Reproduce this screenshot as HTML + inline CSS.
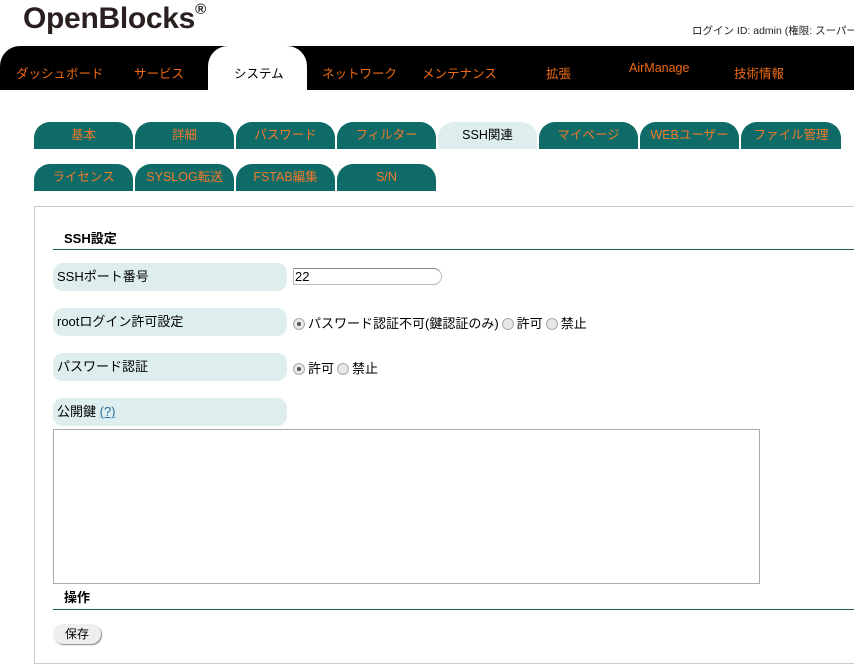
<!DOCTYPE html>
<html><head><meta charset="utf-8"><style>
*{margin:0;padding:0;box-sizing:border-box}
html,body{width:854px;height:669px;overflow:hidden}
body{background:#fff;font-family:"Liberation Sans","Noto Sans CJK JP",sans-serif;position:relative;font-size:13px;color:#000}
.a{position:absolute}
.logo{left:23px;top:1px;font-size:30px;font-weight:bold;color:#2a2020;letter-spacing:-0.3px}
.logo sup{font-size:15px;vertical-align:14px}
.login{left:692px;top:23px;font-size:10.5px;white-space:nowrap;color:#222;width:162px;overflow:hidden}
.nav{left:0;top:46px;width:854px;height:44px;background:#000;border-top-left-radius:20px}
.ni{position:absolute;top:17px;color:#f06a10;font-size:12.5px;white-space:nowrap}
.act{left:208px;top:46px;width:99px;height:44px;background:#fff;border-radius:20px 20px 0 0}
.t{position:absolute;width:99px;height:27px;background:#0e6b68;color:#f07a2a;border-radius:16px 16px 0 0;text-align:center;line-height:26px;font-size:12.5px;white-space:nowrap}
.t.on{background:#deeded;color:#000}
.box{left:34px;top:206px;width:820px;height:458px;border:1px solid #ccc;border-right:none}
.hd{left:64px;font-weight:bold;font-size:13px}
.ln{left:53px;width:801px;height:1px;background:#1e5a55}
.lb{left:53px;width:234px;height:28px;background:#deeded;border-radius:10px;line-height:28px;padding-left:4px;font-size:13px}
.rd{display:inline-block;width:12px;height:12px;border-radius:50%;border:1px solid #aaa;background:#e8e8e8;vertical-align:-2px;position:relative;margin-right:3px}
.rd.c:after{content:"";position:absolute;left:3px;top:3px;width:4px;height:4px;border-radius:50%;background:#555}
.opt{left:293px;font-size:13px;white-space:nowrap}
</style></head><body>
<div class="a logo">OpenBlocks<sup>®</sup></div>
<div class="a login">ログイン ID: admin (権限: スーパーユーザー)</div>
<div class="a nav">
<span class="ni" style="left:16px">ダッシュボード</span>
<span class="ni" style="left:134px">サービス</span>
<span class="ni" style="left:322px">ネットワーク</span>
<span class="ni" style="left:422px">メンテナンス</span>
<span class="ni" style="left:546px">拡張</span>
<span class="ni" style="left:629px;top:15px">AirManage</span>
<span class="ni" style="left:734px">技術情報</span>
</div>
<div class="a act"><span style="position:absolute;left:26px;top:17px;color:#000;font-size:12.5px">システム</span></div>
<div class="t" style="left:34px;top:122px">基本</div>
<div class="t" style="left:135px;top:122px">詳細</div>
<div class="t" style="left:236px;top:122px">パスワード</div>
<div class="t" style="left:337px;top:122px">フィルター</div>
<div class="t on" style="left:438px;top:122px">SSH関連</div>
<div class="t" style="left:539px;top:122px">マイページ</div>
<div class="t" style="left:640px;top:122px">WEBユーザー</div>
<div class="t" style="left:741px;top:122px;width:100px">ファイル管理</div>
<div class="t" style="left:34px;top:164px">ライセンス</div>
<div class="t" style="left:135px;top:164px">SYSLOG転送</div>
<div class="t" style="left:236px;top:164px">FSTAB編集</div>
<div class="t" style="left:337px;top:164px">S/N</div>
<div class="a box"></div>
<div class="a hd" style="top:228px">SSH設定</div>
<div class="a ln" style="top:249px"></div>
<div class="a lb" style="top:263px">SSHポート番号</div>
<div class="a" style="left:293px;top:268px;width:149px;height:17px;border:1px solid #bbb;border-top-color:#888;border-radius:0 10px 10px 0;font-size:13px;line-height:15px;padding-left:1px">22</div>
<div class="a lb" style="top:308px">rootログイン許可設定</div>
<div class="a opt" style="top:313px"><span class="rd c"></span>パスワード認証不可(鍵認証のみ)<span class="rd" style="margin-left:3px"></span>許可<span class="rd" style="margin-left:3px"></span>禁止</div>
<div class="a lb" style="top:353px">パスワード認証</div>
<div class="a opt" style="top:358px"><span class="rd c"></span>許可<span class="rd" style="margin-left:3px"></span>禁止</div>
<div class="a lb" style="top:398px">公開鍵 <span style="color:#2a6fa0;text-decoration:underline">(?)</span></div>
<div class="a" style="left:53px;top:429px;width:707px;height:155px;border:1px solid #aaa"></div>
<div class="a hd" style="top:587px">操作</div>
<div class="a ln" style="top:609px"></div>
<div class="a" style="left:53px;top:624px;width:48px;height:20px;background:#eee;border-radius:10px;box-shadow:1px 1px 1px #888;text-align:center;line-height:20px;font-size:12px">保存</div>
</body></html>
